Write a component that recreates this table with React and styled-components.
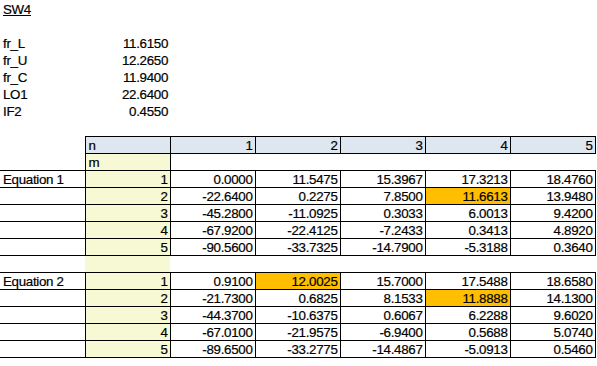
import React from 'react'
import styled, { createGlobalStyle } from 'styled-components'

const GlobalStyle = createGlobalStyle`
  html, body {
    margin: 0;
    padding: 0;
    background: #fff;
  }
  body {
    font-family: "Liberation Sans", Arial, sans-serif;
    font-size: 13.33px;
    color: #000;
  }
`

const COLORS = {
  header: '#dee6ef',
  lime: '#f6f9d4',
  gold: '#ffbf00',
}

const eq1 = [
  ['0.0000', '11.5475', '15.3967', '17.3213', '18.4760'],
  ['-22.6400', '0.2275', '7.8500', '11.6613', '13.9480'],
  ['-45.2800', '-11.0925', '0.3033', '6.0013', '9.4200'],
  ['-67.9200', '-22.4125', '-7.2433', '0.3413', '4.8920'],
  ['-90.5600', '-33.7325', '-14.7900', '-5.3188', '0.3640'],
]

const eq2 = [
  ['0.9100', '12.0025', '15.7000', '17.5488', '18.6580'],
  ['-21.7300', '0.6825', '8.1533', '11.8888', '14.1300'],
  ['-44.3700', '-10.6375', '0.6067', '6.2288', '9.6020'],
  ['-67.0100', '-21.9575', '-6.9400', '0.5688', '5.0740'],
  ['-89.6500', '-33.2775', '-14.4867', '-5.0913', '0.5460'],
]

// cells that are highlighted in gold, as "row-col" within each block
const marked1 = ['1-3']
const marked2 = ['0-1', '1-3']

const params = [
  ['fr_L', '11.6150'],
  ['fr_U', '12.2650'],
  ['fr_C', '11.9400'],
  ['LO1', '22.6400'],
  ['IF2', '0.4550'],
]

function Block({ title, data, marked }) {
  return data.map((vals, r) => (
    <Row key={r}>
      <Cell $edges="tbr">{r === 0 ? title : ''}</Cell>
      <Cell $edges="tblr" $right $bg={COLORS.lime}>{r + 1}</Cell>
      {vals.map((v, c) => (
        <Cell
          key={c}
          $edges="tblr"
          $right
          $bg={marked.includes(`${r}-${c}`) ? COLORS.gold : undefined}
        >
          {v}
        </Cell>
      ))}
    </Row>
  ))
}

function App() {
  return (
    <>
      <GlobalStyle />
      <Sheet>
        <colgroup>
          {Array.from({ length: 7 }).map((_, i) => <col key={i} width="85" />)}
        </colgroup>
        <tbody>
          <Row>
            <Cell><Title>SW4</Title></Cell>
            <Cell colSpan={6} />
          </Row>
          <Row><Cell colSpan={7} /></Row>
          {params.map(([k, v]) => (
            <Row key={k}>
              <Cell>{k}</Cell>
              <Cell $right>{v}</Cell>
              <Cell colSpan={5} />
            </Row>
          ))}
          <Row><Cell colSpan={7} /></Row>
          <Row>
            <Cell />
            <Cell $edges="tblr" $bg={COLORS.header}>n</Cell>
            {[1, 2, 3, 4, 5].map(n => (
              <Cell key={n} $edges="tblr" $right $bg={COLORS.header}>{n}</Cell>
            ))}
          </Row>
          <Row>
            <Cell />
            <Cell $edges="tblr" $bg={COLORS.lime}>m</Cell>
            <Cell colSpan={5} />
          </Row>
          <Block title="Equation 1" data={eq1} marked={marked1} />
          <Row>
            <Cell />
            <Cell $bg={COLORS.lime} />
            <Cell colSpan={5} />
          </Row>
          <Block title="Equation 2" data={eq2} marked={marked2} />
        </tbody>
      </Sheet>
    </>
  )
}

export default App

const Sheet = styled.table`
  border-collapse: collapse;
  table-layout: fixed;
  width: 595px;
  font-family: "Liberation Sans", Arial, sans-serif;
  font-size: 13.33px;
  letter-spacing: -0.3px;
  -webkit-text-stroke: 0.2px #000;
`
const Row = styled.tr`
  height: 17px;
`
const Cell = styled.td`
  padding: 0 2px 0 3px;
  line-height: 15px;
  vertical-align: bottom;
  white-space: nowrap;
  overflow: hidden;
  text-align: ${p => (p.$right ? 'right' : 'left')};
  background: ${p => p.$bg || 'transparent'};
  border-top: ${p => (p.$edges && p.$edges.includes('t') ? '1px solid #000' : 'none')};
  border-bottom: ${p => (p.$edges && p.$edges.includes('b') ? '1px solid #000' : 'none')};
  border-left: ${p => (p.$edges && p.$edges.includes('l') ? '1px solid #000' : 'none')};
  border-right: ${p => (p.$edges && p.$edges.includes('r') ? '1px solid #000' : 'none')};
`
const Title = styled.span`
  text-decoration: underline;
`
